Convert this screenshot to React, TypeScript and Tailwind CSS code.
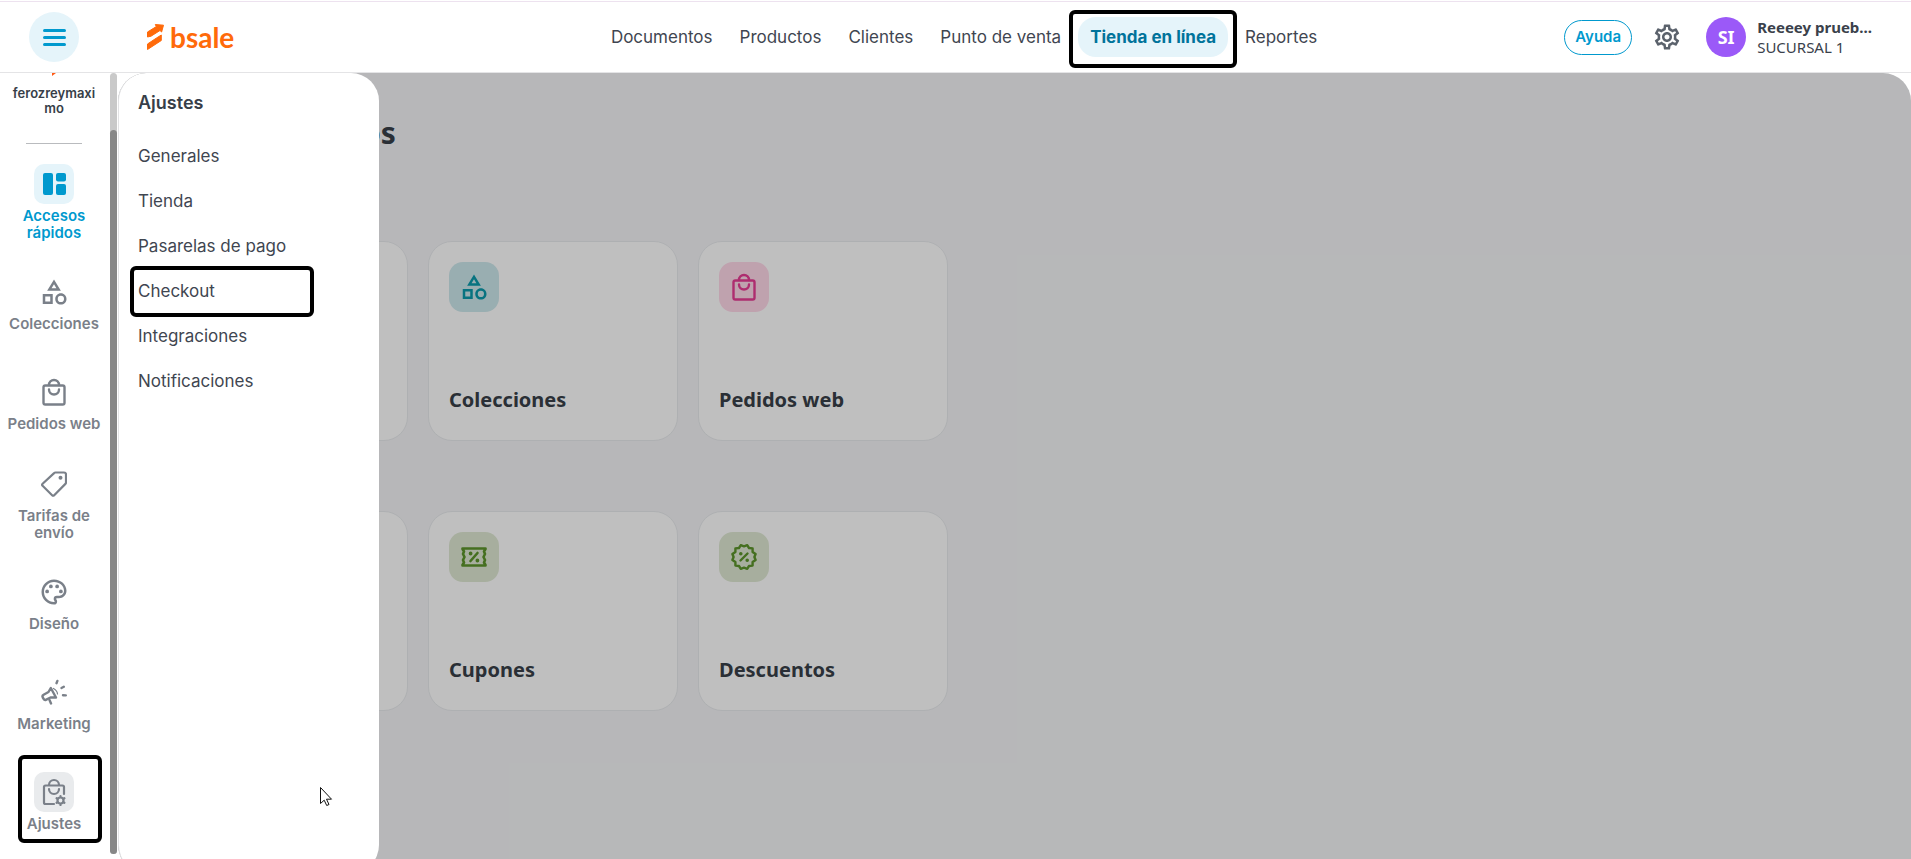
import type { ReactNode } from "react";
import {
  MdOutlineCategory,
  MdOutlinePalette,
  MdOutlineSettings,
} from "react-icons/md";

const BagIcon = () => (
  <svg
    viewBox="0 0 24 28"
    className="h-7 w-6"
    fill="none"
    stroke="currentColor"
    strokeWidth="2.400"
    strokeLinecap="round"
    aria-hidden="true"
  >
    <rect x="1.500" y="7.500" width="21" height="19" rx="1.800" />
    <path d="M7 7a5 5 0 0 1 10 0" />
    <path d="M7 11.500a5 5 0 0 0 10 0" />
  </svg>
);

const BagGearIcon = () => (
  <svg
    viewBox="0 0 24 28"
    className="h-7 w-6"
    fill="none"
    stroke="currentColor"
    strokeWidth="2.200"
    strokeLinecap="round"
    aria-hidden="true"
  >
    <path d="M12 26H3.500A1.500 1.500 0 0 1 2 24.500V9a1.500 1.500 0 0 1 1.500-1.500h17A1.500 1.500 0 0 1 22 9v7" />
    <path d="M7 7a5 5 0 0 1 10 0" />
    <path d="M7 11a5 5 0 0 0 10 0" />
    <circle cx="18.500" cy="22.500" r="3" />
    <path d="M18.500 18v.5M18.500 26.500v.5M14.600 20.200l.5.300M21.900 24.500l.5.300M14.600 24.800l.5-.3M21.900 20.500l.5-.3" />
  </svg>
);

const TagIcon = () => (
  <svg viewBox="0 0 26 26" className="size-[26px]" fill="none" aria-hidden="true">
    <path
      d="M14.500 1.500h8.500a2 2 0 0 1 2 2v8a2 2 0 0 1-.6 1.400L13.200 24.200a1.500 1.500 0 0 1-2.100 0L1.600 14.800a1.500 1.500 0 0 1 0-2.100L13.100 2.100a2 2 0 0 1 1.400-.6Z"
      stroke="currentColor"
      strokeWidth="2.200"
      strokeLinejoin="round"
    />
    <circle cx="19.500" cy="6.800" r="2" fill="currentColor" />
  </svg>
);

const MegaphoneIcon = () => (
  <svg
    viewBox="0 0 26 26"
    className="size-[26px]"
    fill="none"
    stroke="currentColor"
    strokeWidth="2.400"
    strokeLinecap="round"
    strokeLinejoin="round"
    aria-hidden="true"
  >
    <path d="M9.800 9 7.500 13 2.600 15.800a2 2 0 0 0-.8 2.700l.8 1.300a2 2 0 0 0 2.700.8L9.500 18.500H15Z" />
    <path d="M8.500 21l1.500 3.500" />
    <path d="M12.500 9.500q3.800 2.200 4 5.500" strokeWidth="1.200" />
    <path d="M15.500 4.200l.9-2.300M20.500 9l2.300-1.200M22 16.200l2.800.2" />
  </svg>
);

const BoardIcon = () => (
  <svg viewBox="0 0 24 24" className="size-6" fill="currentColor" aria-hidden="true">
    <rect x="1" y="1" width="10" height="22" rx="2" />
    <rect x="14" y="1" width="10" height="8.500" rx="2" />
    <rect x="14" y="12" width="10" height="11" rx="2" />
  </svg>
);

const CouponIcon = () => (
  <svg
    viewBox="0 0 26 22"
    className="h-[22px] w-[26px]"
    fill="none"
    stroke="currentColor"
    strokeWidth="2.600"
    strokeLinecap="round"
    strokeLinejoin="round"
    aria-hidden="true"
  >
    <path d="M1.500 2.500h23v.5L23 5.500 24 8l-1.500 3 1.500 3-1 2.500 1.500 2.500v.5h-23V19L3 16.500 2 14l1.500-3L2 8l1-2.500L1.500 3Z" />
    <path d="M9.500 15l7-8" />
    <circle cx="9.600" cy="7.500" r="1" fill="currentColor" strokeWidth="1.800" />
    <circle cx="16.400" cy="14.500" r="1" fill="currentColor" strokeWidth="1.800" />
  </svg>
);

const DiscountIcon = () => (
  <svg
    viewBox="0 0 26 26"
    className="size-[26px]"
    fill="none"
    stroke="currentColor"
    strokeWidth="2.400"
    strokeLinecap="round"
    strokeLinejoin="round"
    aria-hidden="true"
  >
    <path d="M13 2.400 16.200 1.200 18 4 21.600 4.400 21.600 8 24.600 10 23.400 13 24.600 16 21.600 18 21.600 21.600 18 22 16.200 24.800 13 23.600 9.800 24.800 8 22 4.400 21.600 4.400 18 1.400 16 2.600 13 1.400 10 4.400 8 4.400 4.400 8 4 9.800 1.200Z" />
    <path d="M9.500 16.500l7-7" />
    <circle cx="9.800" cy="9.800" r="1" fill="currentColor" strokeWidth="1.600" />
    <circle cx="16.200" cy="16.200" r="1" fill="currentColor" strokeWidth="1.600" />
  </svg>
);

const Logo = () => (
  <a href="#" className="flex items-center gap-[5px] text-[#ff6a0a]">
    <svg viewBox="0 0 19 30" className="h-[30px] w-[19px]" aria-hidden="true">
      <path
        d="M1.500 10 10.300 4.600 9.300 2.500 17.500 3.200 15.600 10 14 8.500 5 14.200 1.500 15ZM1.500 22 10.500 16 15.300 13V18.500L1.500 27.500Z"
        fill="currentColor"
        stroke="currentColor"
        strokeWidth="1"
        strokeLinejoin="round"
      />
    </svg>
    <span className="font-['Lato',sans-serif] text-[28px] leading-[30px] font-bold">
      bsale
    </span>
  </a>
);

// thick black frame drawn around a highlighted control
const Mark = ({ className }: { className: string }) => (
  <span
    className={`pointer-events-none absolute rounded-md border-4 border-black ${className}`}
  />
);

const navItems = [
  "Documentos",
  "Productos",
  "Clientes",
  "Punto de venta",
  "Tienda en línea",
  "Reportes",
];

const sideItems: { label: string; icon: ReactNode }[] = [
  { label: "Accesos rápidos", icon: <BoardIcon /> },
  {
    label: "Colecciones",
    icon: <MdOutlineCategory className="size-[30px]" />,
  },
  { label: "Pedidos web", icon: <BagIcon /> },
  { label: "Tarifas de envío", icon: <TagIcon /> },
  { label: "Diseño", icon: <MdOutlinePalette className="size-[30px]" /> },
  { label: "Marketing", icon: <MegaphoneIcon /> },
  { label: "Ajustes", icon: <BagGearIcon /> },
];

const menuItems = [
  "Generales",
  "Tienda",
  "Pasarelas de pago",
  "Checkout",
  "Integraciones",
  "Notificaciones",
];

const cards: { label: string; icon: ReactNode; tile: string }[][] = [
  [
    { label: "", icon: null, tile: "" },
    {
      label: "Colecciones",
      icon: <MdOutlineCategory className="size-[30px]" />,
      tile: "bg-[#cde8ec] text-[#0a9aab]",
    },
    {
      label: "Pedidos web",
      icon: <BagIcon />,
      tile: "bg-[#ffd8e9] text-[#e83c94]",
    },
  ],
  [
    { label: "", icon: null, tile: "" },
    {
      label: "Cupones",
      icon: <CouponIcon />,
      tile: "bg-[#dfe9d3] text-[#5c952b]",
    },
    {
      label: "Descuentos",
      icon: <DiscountIcon />,
      tile: "bg-[#dfe9d3] text-[#5c952b]",
    },
  ],
];

const Header = () => (
  <header className="flex h-[71px] shrink-0 items-center border-b border-[#e4e4e6] bg-white">
    <button
      aria-label="Menú"
      className="ml-[29px] flex size-[50px] shrink-0 flex-col items-center justify-center gap-1 rounded-full bg-[#e5f4fa]"
    >
      <span className="h-[3px] w-[23px] rounded-full bg-[#0099ce]" />
      <span className="h-[3px] w-[23px] rounded-full bg-[#0099ce]" />
      <span className="h-[3px] w-[23px] rounded-full bg-[#0099ce]" />
    </button>
    <div className="ml-[67px] w-[90px] shrink-0">
      <Logo />
    </div>
    <nav className="flex flex-1 items-center justify-center gap-[7px] pl-32 text-[17px] leading-7 text-[#3f4651]">
      {navItems.map((item) =>
        item === "Tienda en línea" ? (
          <a
            key={item}
            href="#"
            className="relative rounded-[18px] bg-[#e5f4fa] px-3 py-[6px] font-bold text-[#00739b]"
          >
            {item}
            <Mark className="-inset-x-[9px] -top-[7px] -bottom-[11px]" />
          </a>
        ) : (
          <a key={item} href="#" className="px-[10px] py-[6px]">
            {item}
          </a>
        )
      )}
    </nav>
    <div className="mr-[39px] flex shrink-0 items-center">
      <button className="h-[35px] w-[68px] rounded-full border border-[#0099ce] text-[15px] font-semibold text-[#0099ce]">
        Ayuda
      </button>
      <button aria-label="Configuración" className="ml-5 text-[#5b626c]">
        <MdOutlineSettings className="size-[30px]" />
      </button>
      <button className="ml-6 flex items-center gap-[11px] text-left font-['Noto_Sans',sans-serif]">
        <span className="flex size-10 items-center justify-center rounded-full bg-[#9b59f8] text-[18px] font-bold text-white">
          SI
        </span>
        <span className="flex flex-col text-[15px] leading-5 text-[#3a414b]">
          <span className="font-bold">Reeeey prueb...</span>
          <span>SUCURSAL 1</span>
        </span>
      </button>
    </div>
  </header>
);

const Sidebar = () => (
  <aside className="flex w-[118px] shrink-0">
    <div className="flex w-[110px] flex-col items-center pr-0.5 text-center text-[15px] leading-[17px] font-semibold text-[#7a8089]">
      <div className="h-[13px] text-[#ff5a14]">
        <svg viewBox="0 0 4 3" className="h-[3px] w-1" aria-hidden="true">
          <path d="M0 0h4L0 3Z" fill="currentColor" />
        </svg>
      </div>
      <p className="w-[84px] text-[13px] leading-[15px] break-all text-[#373e48]">
        ferozreymaximo
      </p>
      <hr className="mt-[27px] mb-2 w-14 shrink-0 border-[#b9bbbe]" />
      {sideItems.map((item) => (
        <a
          key={item.label}
          href="#"
          className={`relative flex h-[100px] w-full shrink-0 flex-col items-center justify-center ${
            item.label === "Accesos rápidos" ? "text-[#0099ce]" : ""
          }`}
        >
          <span
            className={`mb-[3px] flex size-10 items-center justify-center rounded-[10px] ${
              item.label === "Accesos rápidos" ? "bg-[#e5f4fa]" : ""
            } ${item.label === "Ajustes" ? "bg-[#e9ebed]" : ""}`}
          >
            {item.icon}
          </span>
          <span className="max-w-[98px]">
            {item.label.startsWith("Tarifas") ? (
              <>
                Tarifas de
                <br />
                envío
              </>
            ) : (
              item.label
            )}
          </span>
          {item.label === "Ajustes" && (
            <Mark className="top-[3px] right-[6px] bottom-[9px] left-[18px]" />
          )}
        </a>
      ))}
    </div>
    <div className="h-[781px] w-[7px] rounded-full bg-[#c9c9c9] pt-[57px]">
      <div className="h-full rounded-full bg-[#878787]" />
    </div>
  </aside>
);

const SettingsMenu = () => (
  <div className="absolute top-0 bottom-0 left-0 w-[261px] rounded-[28px] border-l border-[#e3e3e5] bg-white pt-4 pr-5 pl-[19px] text-[#3f4651]">
    <h2 className="text-[18px] leading-7 font-semibold text-[#373e48]">Ajustes</h2>
    <ul className="mt-[17px] text-[17px]">
      {menuItems.map((item) => (
        <li key={item} className="relative flex h-[45px] items-center">
          <a href="#">{item}</a>
          {item === "Checkout" && (
            <Mark className="-left-2 -top-[3px] h-[51px] w-[184px]" />
          )}
        </li>
      ))}
    </ul>
  </div>
);

const App = () => {
  return (
    <div className="h-screen overflow-hidden bg-white pt-px font-['Inter',sans-serif]">
      <div className="flex h-full flex-col border-t border-[#ede2ef]">
        <Header />
        <div className="flex min-h-0 flex-1">
          <Sidebar />
          <div className="relative -mb-[14px] min-w-0 flex-1 overflow-hidden rounded-t-[28px] rounded-bl-[28px] bg-[#f4f5f7]">
            <main className="px-10 pt-10 font-['Noto_Sans',sans-serif] text-[#383f48]">
              <h1 className="text-[30px] leading-10 font-bold">Accesos rápidos</h1>
              {cards.map((row, i) => (
                <section key={i} className={i ? "mt-[70px]" : "mt-[88px]"}>
                  <div className="flex gap-5">
                    {row.map((card, j) => (
                      <a
                        key={j}
                        href="#"
                        className="flex h-[200px] w-[250px] flex-col justify-between rounded-3xl border border-[#e9ebee] bg-white p-5"
                      >
                        <span
                          className={`flex size-[50px] items-center justify-center rounded-[14px] ${card.tile}`}
                        >
                          {card.icon}
                        </span>
                        <span className="text-[20px] leading-10 font-bold">
                          {card.label}
                        </span>
                      </a>
                    ))}
                  </div>
                </section>
              ))}
            </main>
            <div className="absolute inset-0 bg-black/25" />
            <SettingsMenu />
            <svg
              viewBox="0 0 14 22"
              className="absolute top-[713px] left-[201px] h-[22px] w-[14px]"
              aria-hidden="true"
            >
              <path
                d="M1.500 1.500v16l3.700-3.300 2.500 5.300 2.300-1-2.500-5.300H12.500Z"
                fill="#fff"
                stroke="#111"
              />
            </svg>
          </div>
        </div>
      </div>
    </div>
  );
};

export default App;
